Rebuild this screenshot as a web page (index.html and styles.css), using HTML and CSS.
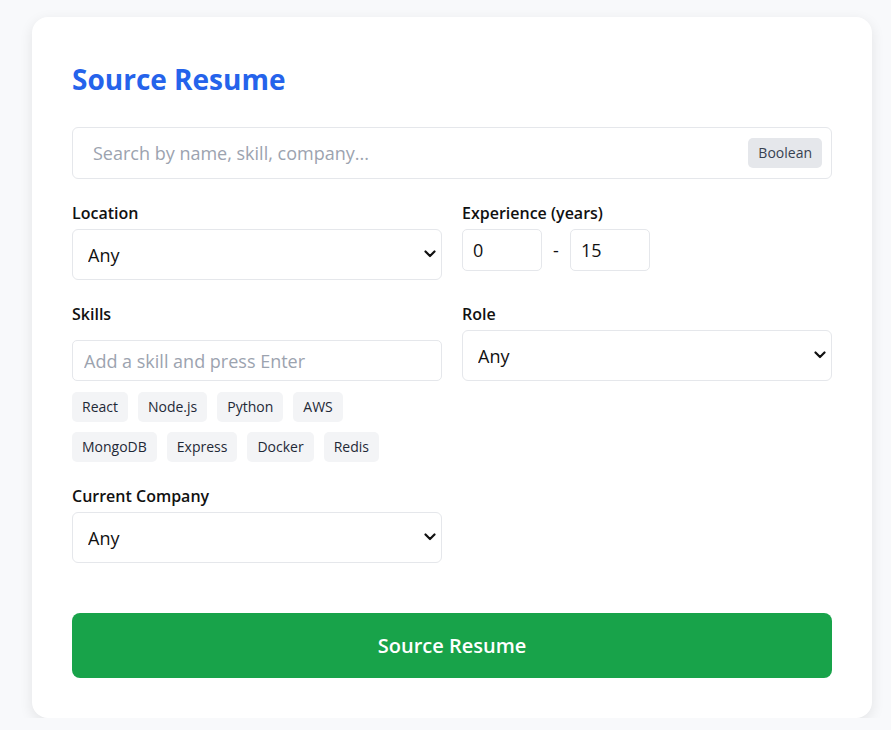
FILE: index.html
```html
<!DOCTYPE html>
<html lang="en">
<head>
<meta charset="utf-8">
<title>Source Resume</title>
<link rel="stylesheet" href="styles.css">
</head>
<body>
<div class="card">
  <h1 class="title">Source Resume</h1>

  <div class="search">
    <input class="search-input" type="text" placeholder="Search by name, skill, company...">
    <span class="badge">Boolean</span>
  </div>

  <div class="grid">
    <div class="field">
      <label class="label">Location</label>
      <div class="select-wrap">
        <select class="select"><option>Any</option></select>
        <svg class="chev" width="12" height="8" viewBox="0 0 12 8"><path d="M1.5 1.5 L6 6 L10.5 1.5" fill="none" stroke="#111" stroke-width="2.2" stroke-linecap="round" stroke-linejoin="round"/></svg>
      </div>
    </div>
    <div class="field">
      <label class="label">Experience (years)</label>
      <div class="exp">
        <input class="num" type="text" value="0">
        <span class="dash">-</span>
        <input class="num" type="text" value="15">
      </div>
    </div>

    <div class="field">
      <label class="label">Skills</label>
      <input class="skill-input" type="text" placeholder="Add a skill and press Enter">
      <div class="tags">
        <span class="tag">React</span>
        <span class="tag">Node.js</span>
        <span class="tag">Python</span>
        <span class="tag">AWS</span>
        <span class="tag">MongoDB</span>
        <span class="tag">Express</span>
        <span class="tag">Docker</span>
        <span class="tag">Redis</span>
      </div>
    </div>
    <div class="field">
      <label class="label">Role</label>
      <div class="select-wrap">
        <select class="select"><option>Any</option></select>
        <svg class="chev" width="12" height="8" viewBox="0 0 12 8"><path d="M1.5 1.5 L6 6 L10.5 1.5" fill="none" stroke="#111" stroke-width="2.2" stroke-linecap="round" stroke-linejoin="round"/></svg>
      </div>
    </div>

    <div class="field">
      <label class="label">Current Company</label>
      <div class="select-wrap">
        <select class="select"><option>Any</option></select>
        <svg class="chev" width="12" height="8" viewBox="0 0 12 8"><path d="M1.5 1.5 L6 6 L10.5 1.5" fill="none" stroke="#111" stroke-width="2.2" stroke-linecap="round" stroke-linejoin="round"/></svg>
      </div>
    </div>
  </div>

  <button class="submit" type="button">Source Resume</button>
</div>
</body>
</html>
```

FILE: styles.css
```css
* { box-sizing: border-box; }

html, body {
  margin: 0;
  padding: 0;
}

body {
  background: #f8f9fb;
  font-family: "Open Sans", "Noto Sans", sans-serif;
  color: #111;
  padding: 17px 0 0 32px;
}

.card {
  width: 840px;
  background: #fff;
  border-radius: 16px;
  padding: 40px;
  box-shadow: 0 4px 14px rgba(0, 0, 0, 0.09);
}

.title {
  margin: 0;
  font-size: 28px;
  line-height: 44px;
  font-weight: 700;
  color: #2563eb;
}

.search {
  margin-top: 26px;
  position: relative;
  display: flex;
  align-items: center;
  height: 52px;
  border: 1px solid #e5e7eb;
  border-radius: 6px;
  padding: 0 9px 0 20px;
}

.search-input {
  flex: 1;
  border: none;
  outline: none;
  font-family: inherit;
  font-size: 18px;
  color: #111;
  padding: 0;
  background: transparent;
}

.search-input::placeholder { color: #9ca3af; }

.badge {
  background: #e5e7eb;
  color: #374151;
  font-size: 14px;
  line-height: 30px;
  height: 30px;
  padding: 0 10px;
  border-radius: 5px;
}

.grid {
  margin-top: 22px;
  display: grid;
  grid-template-columns: 370px 370px;
  column-gap: 20px;
  row-gap: 22px;
  align-items: start;
}

.field {
  display: flex;
  flex-direction: column;
}

.label {
  display: block;
  font-size: 16px;
  line-height: 24px;
  font-weight: 600;
  margin-bottom: 4px;
  color: #111;
}

.select-wrap {
  position: relative;
}

.select {
  width: 100%;
  height: 51px;
  appearance: none;
  -webkit-appearance: none;
  background: #fff;
  border: 1px solid #e5e7eb;
  border-radius: 6px;
  padding: 0 36px 0 15px;
  font-family: inherit;
  font-size: 18px;
  color: #111;
}

.chev {
  position: absolute;
  right: 6px;
  top: 21px;
  pointer-events: none;
}

.exp {
  display: flex;
  align-items: center;
  gap: 10px;
}

.num {
  width: 80px;
  height: 42px;
  border: 1px solid #e5e7eb;
  border-radius: 5px;
  padding: 0 10px;
  font-family: inherit;
  font-size: 18px;
  color: #111;
}

.dash {
  font-size: 18px;
  width: 8px;
  text-align: center;
}

.skill-input {
  margin-top: 10px;
  height: 41px;
  width: 100%;
  border: 1px solid #e5e7eb;
  border-radius: 5px;
  padding: 0 11px;
  font-family: inherit;
  font-size: 18px;
  color: #111;
}

.skill-input::placeholder { color: #9ca3af; }

.tags {
  margin-top: 11px;
  display: flex;
  flex-wrap: wrap;
  gap: 10px;
  width: 320px;
}

.tag {
  background: #f3f4f6;
  color: #1f2937;
  font-size: 14px;
  line-height: 30px;
  height: 30px;
  padding: 0 10px;
  border-radius: 5px;
}

.submit {
  margin-top: 50px;
  width: 100%;
  height: 65px;
  border: none;
  border-radius: 8px;
  background: #18a34a;
  color: #fff;
  font-family: inherit;
  font-size: 20px;
  font-weight: 600;
}
```
